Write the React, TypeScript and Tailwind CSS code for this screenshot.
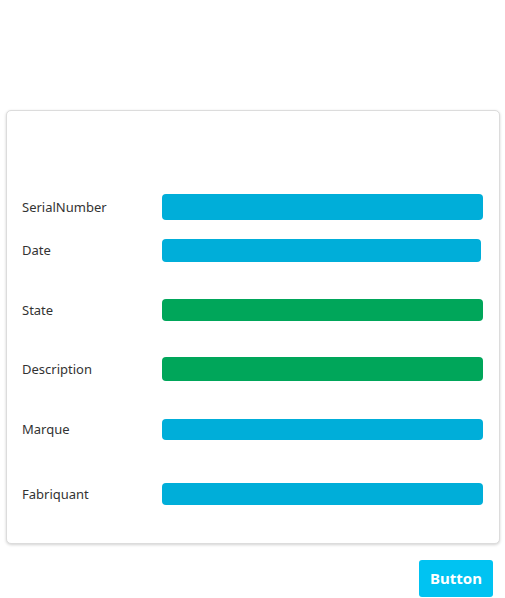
import React from 'react';

const BLUE = 'bg-[#00aed9]';
const GREEN = 'bg-[#00a65a]';

const rows = [
  { label: 'SerialNumber', color: BLUE, cls: 'mt-[83px] h-[26px] mr-[16px]' },
  { label: 'Date', color: BLUE, cls: 'mt-[19px] h-[23px] mr-[18px]' },
  { label: 'State', color: GREEN, cls: 'mt-[37px] h-[22px] mr-[16px]' },
  { label: 'Description', color: GREEN, cls: 'mt-[36px] h-[24px] mr-[16px]' },
  { label: 'Marque', color: BLUE, cls: 'mt-[38px] h-[21px] mr-[16px]' },
  { label: 'Fabriquant', color: BLUE, cls: 'mt-[43px] h-[22px] mr-[16px]' },
];

export default function App() {
  return (
    <div className="w-[505px] h-[598px] bg-white font-['Noto_Sans',sans-serif] text-[#333333] pt-[110px] flex flex-col">
      <div className="ml-[6px] w-[494px] bg-white border border-[#dcdcdc] rounded-[5px] shadow-[0_1px_3px_rgba(0,0,0,0.18)] pb-[38px] flex flex-col">
        {rows.map((r) => (
          <div key={r.label} className={`flex items-center ${r.cls}`}>
            <span className="w-[155px] shrink-0 pl-[15px] text-[13px] leading-none">{r.label}</span>
            <div className={`flex-1 h-full rounded-[4px] ${r.color}`} />
          </div>
        ))}
      </div>
      <div className="flex justify-end mt-[16px] mr-[12px]">
        <button className="w-[74px] h-[37px] bg-[#00c3f2] text-white font-bold text-[15px] rounded-[3px]">
          Button
        </button>
      </div>
    </div>
  );
}
